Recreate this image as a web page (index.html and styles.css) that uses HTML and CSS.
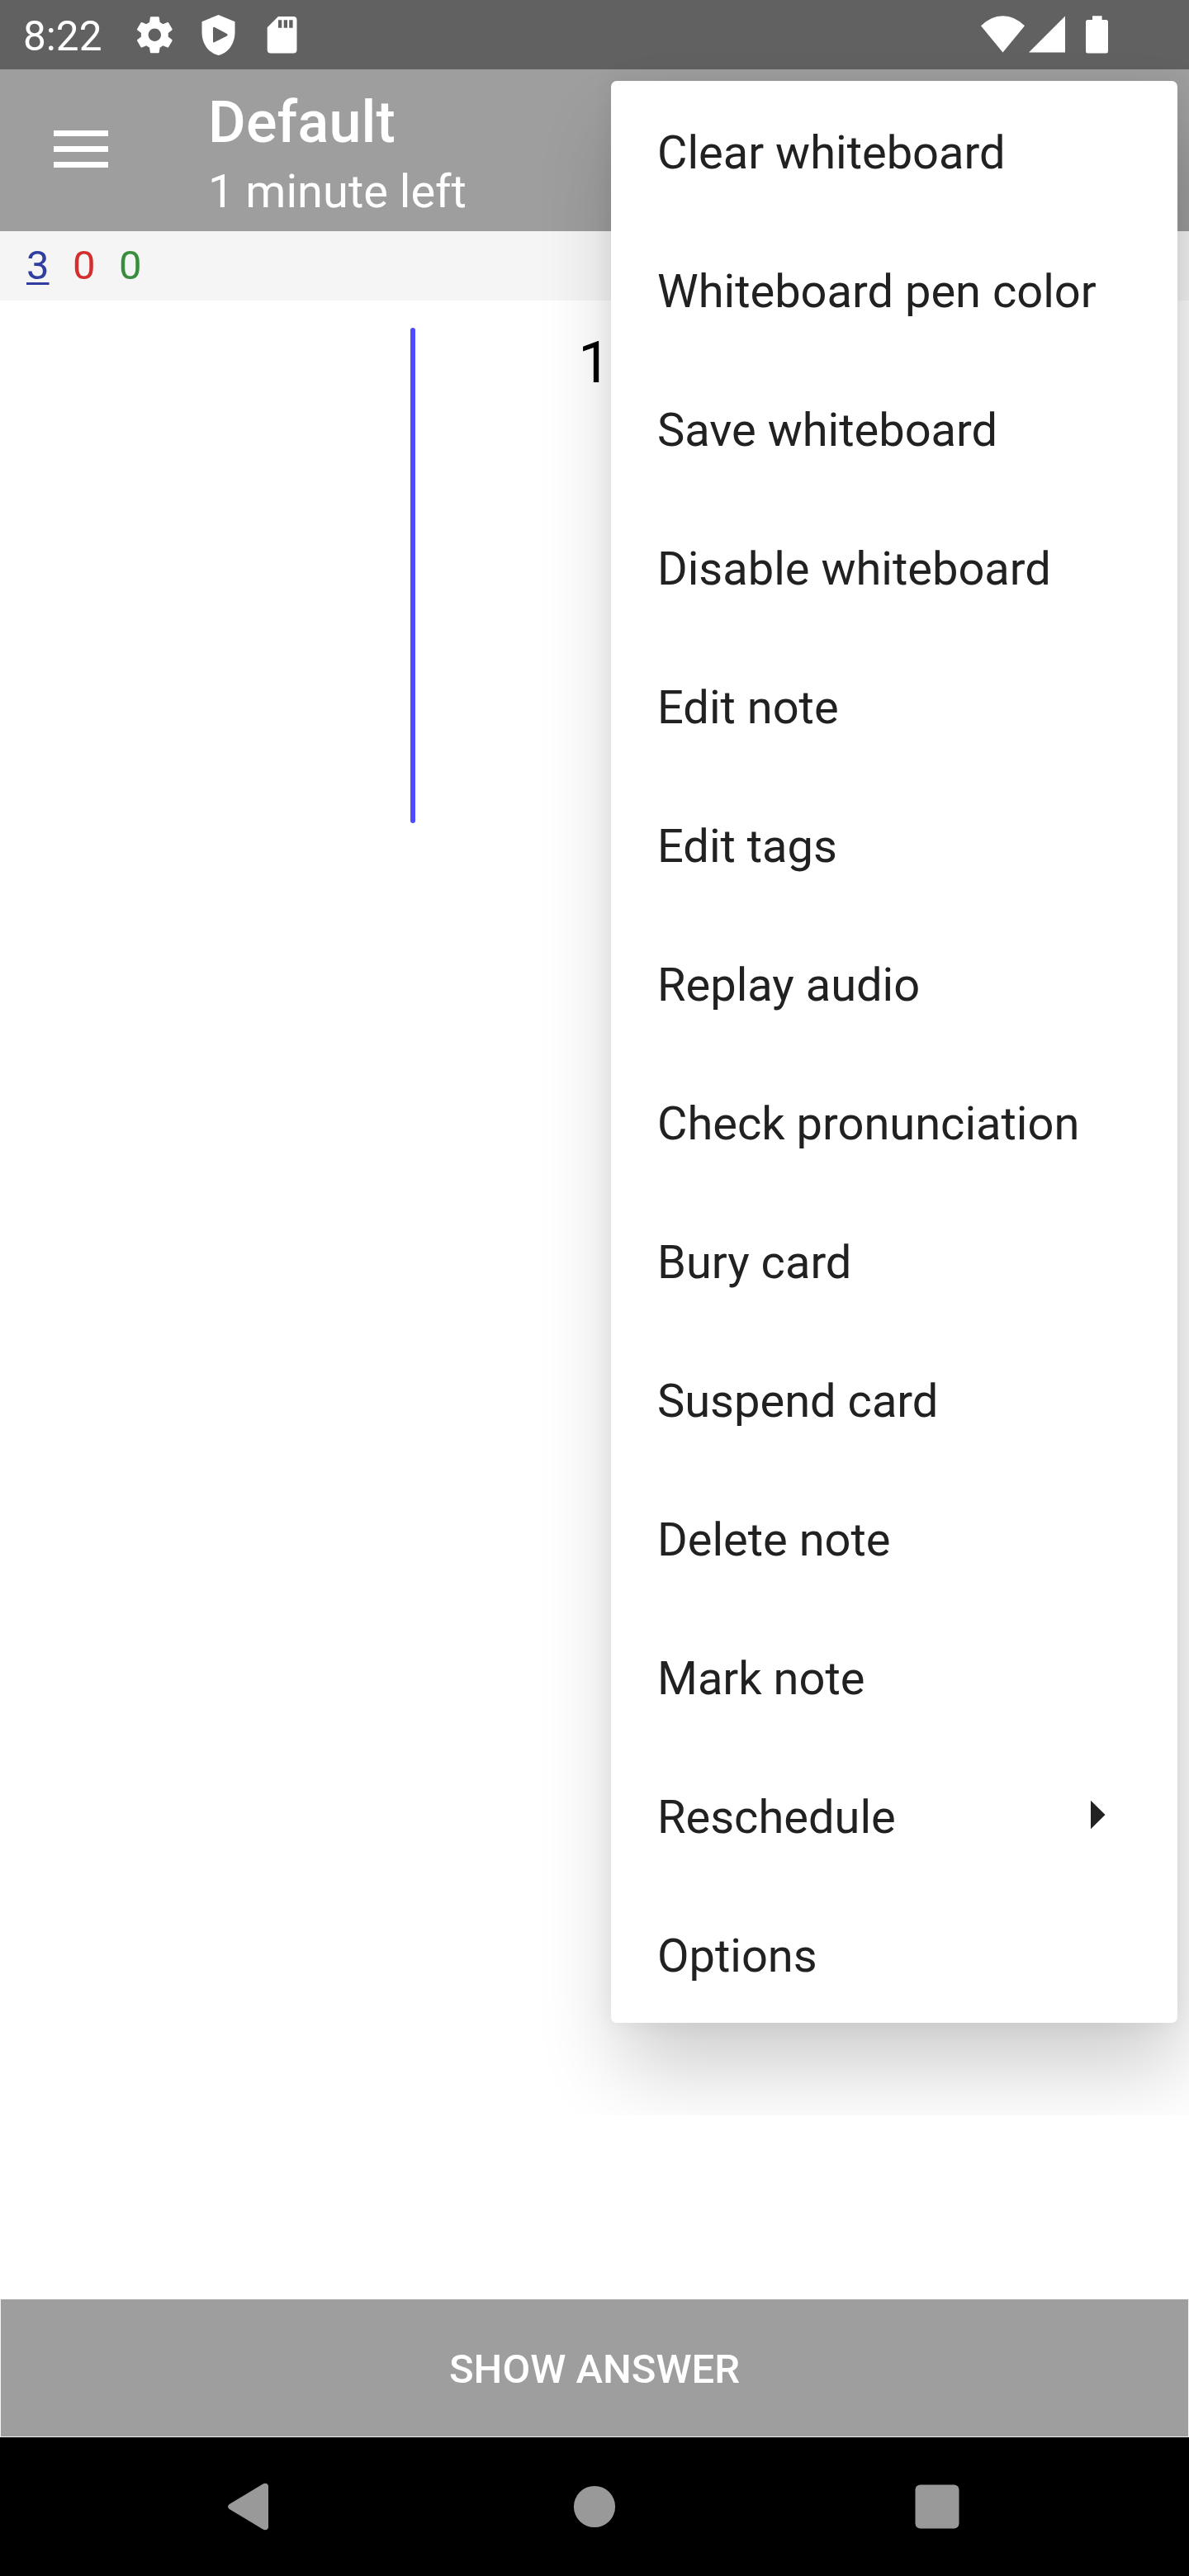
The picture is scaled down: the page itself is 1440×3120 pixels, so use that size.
FILE: index.html
```html
<!DOCTYPE html>
<html lang="en">
<head>
<meta charset="utf-8">
<title>Default</title>
<link rel="stylesheet" href="styles.css">
</head>
<body>
<div class="screen">
  <header class="status">
    <span class="clock">8:22</span>
    <svg class="status-left" width="200" height="84" viewBox="160 0 200 84">
      <path transform="translate(161 15.9) scale(2.195)" d="M19.43 12.98c.04-.32.07-.64.07-.98s-.03-.66-.07-.98l2.11-1.65c.19-.15.24-.42.12-.64l-2-3.46c-.12-.22-.39-.3-.61-.22l-2.49 1c-.52-.4-1.08-.73-1.69-.98l-.38-2.65C14.46 2.18 14.25 2 14 2h-4c-.25 0-.46.18-.49.42l-.38 2.65c-.61.25-1.17.59-1.69.98l-2.49-1c-.23-.09-.49 0-.61.22l-2 3.46c-.13.22-.07.49.12.64l2.11 1.65c-.04.32-.07.65-.07.98s.03.66.07.98l-2.11 1.65c-.19.15-.24.42-.12.64l2 3.46c.12.22.39.3.61.22l2.49-1c.52.4 1.08.73 1.69.98l.38 2.65c.03.24.24.42.49.42h4c.25 0 .46-.18.49-.42l.38-2.65c.61-.25 1.17-.59 1.69-.98l2.49 1c.23.09.49 0 .61-.22l2-3.46c.12-.22.07-.49-.12-.64l-2.11-1.65zM12 15.5c-1.93 0-3.5-1.57-3.5-3.5s1.57-3.5 3.5-3.5 3.5 1.57 3.5 3.5-1.57 3.5-3.5 3.5z"/>
      <path fill-rule="evenodd" d="M264.5 18L284.5 26.3V39C284.5 54 275.500 64.500 264.500 67C253.500 64.500 244.500 54 244.500 39V26.300ZM258 33.500V51Q258.500 51.800 260 51L275 43.500Q276.300 42.300 275 41L260 33Q258.500 32.500 258 33.500Z"/>
      <path fill-rule="evenodd" d="M337 20H355.200Q359.500 20 359.500 24.300V60.200Q359.500 64.500 355.200 64.500H328Q323.700 64.500 323.700 60.200V33.300ZM337 24.300V33.700H341.300V24.300ZM343.700 24.300V33.700H348V24.300ZM350.200 24.300V33.700H354.600V24.300Z"/>
    </svg>
    <svg class="status-right" width="156" height="84" viewBox="1187 0 156 84">
      <path d="M1188 31.300Q1200 19.200 1214.500 19.200T1241 31.300L1214.500 63.500Z"/>
      <path d="M1246 63.600L1290 19.500V63.600Z"/>
      <path d="M1323 19.300H1334.600V24H1339.500Q1342 24 1342 26.500V62Q1342 64.500 1339.500 64.500H1317.500Q1315 64.500 1315 62V26.500Q1315 24 1317.500 24H1323Z"/>
    </svg>
  </header>
  <div class="appbar">
    <svg class="hamburger" width="66" height="45" viewBox="0 0 66 45"><path d="M0 0H66V7H0ZM0 19H66V26H0ZM0 38H66V45H0Z"/></svg>
    <div class="titles">
      <div class="title">Default</div>
      <div class="subtitle">1 minute left</div>
    </div>
  </div>
  <div class="counts">
    <span class="count-new">3</span>
    <span class="count-learn">0</span>
    <span class="count-review">0</span>
  </div>
  <main class="card">
    <span class="question">1</span>
    <div class="stroke"></div>
  </main>
  <button class="answer">SHOW ANSWER</button>
  <nav class="navbar">
    <svg width="60" height="60" viewBox="275 3006 60 60"><path d="M277.800 3033.100L318.500 3008.500Q322 3006.800 324.200 3009Q325 3010 325 3011.500V3060.500Q325 3062 324.200 3063Q322 3065.200 318.500 3063.500L277.800 3038.900Q274.200 3036 277.800 3033.100Z"/></svg>
    <svg width="60" height="60" viewBox="0 0 60 60"><circle cx="30" cy="30" r="25.100"/></svg>
    <svg width="60" height="60" viewBox="0 0 60 60"><rect x="3.500" y="3.500" width="53" height="53" rx="6"/></svg>
  </nav>
  <ul class="menu">
    <li>Clear whiteboard</li>
    <li>Whiteboard pen color</li>
    <li>Save whiteboard</li>
    <li>Disable whiteboard</li>
    <li>Edit note</li>
    <li>Edit tags</li>
    <li>Replay audio</li>
    <li>Check pronunciation</li>
    <li>Bury card</li>
    <li>Suspend card</li>
    <li>Delete note</li>
    <li>Mark note</li>
    <li>Reschedule <svg class="arrow" width="18" height="36" viewBox="0 0 18 36"><path d="M0 .700L17.500 18L0 35.300Z"/></svg></li>
    <li>Options</li>
  </ul>
</div>
</body>
</html>
```

FILE: styles.css
```css
* {
  box-sizing: border-box;
}

body {
  margin: 0;
  font-family: Roboto, "Liberation Sans", sans-serif;
}

svg {
  display: block;
  flex: none;
}

.screen {
  position: relative;
  display: flex;
  flex-direction: column;
  width: 1440px;
  height: 3120px;
  overflow: hidden;
  background: #fff;
}

.status {
  display: flex;
  align-items: center;
  height: 84px;
  padding: 0 97px 0 28px;
  background: #616161;
  color: #fff;
  fill: #fff;
}

.clock {
  width: 132px;
  padding-top: 4px;
  font-size: 49.500px;
  line-height: 58px;
}

.status-right {
  margin-left: auto;
}

.appbar {
  display: flex;
  align-items: flex-start;
  height: 196px;
  padding-left: 65px;
  background: #9e9e9e;
  color: #fff;
}

.hamburger {
  margin: 74px 121px 0 0;
  fill: #fff;
}

.titles {
  padding-top: 23px;
}

.title {
  font-size: 70px;
  font-weight: 500;
  line-height: 82px;
  letter-spacing: .2px;
}

.subtitle {
  padding-top: 10px;
  font-size: 56px;
  line-height: 66px;
}

.counts {
  display: flex;
  align-items: center;
  gap: 28.500px;
  height: 84px;
  padding-left: 32px;
  background: #f5f5f5;
  font-size: 49px;
  line-height: 58px;
}

.count-new {
  color: #303f9f;
  text-decoration: underline;
  text-decoration-thickness: 3px;
  text-underline-offset: 4px;
}

.count-learn {
  color: #d32f2f;
}

.count-review {
  color: #388e3c;
}

.card {
  position: relative;
  flex: 1;
  padding-top: 34px;
  text-align: center;
  font-size: 70px;
  line-height: 82px;
  color: #000;
}

.question {
  display: block;
}

/* Freehand pen mark on the whiteboard layer */
.stroke {
  position: absolute;
  left: 497px;
  top: 33px;
  width: 6px;
  height: 600px;
  border-radius: 3px;
  background: #4d4dff;
}

.answer {
  height: 168px;
  padding: 4px 0 0;
  border: 1px solid #f3f3f3;
  background: #9e9e9e;
  color: #fff;
  font: 500 49px/58px Roboto, "Liberation Sans", sans-serif;
}

.navbar {
  display: grid;
  grid-template-columns: repeat(3, 415px);
  place-content: center;
  justify-items: center;
  height: 168px;
  background: #000;
  fill: #999;
}

.menu {
  position: absolute;
  top: 98px;
  right: 14px;
  width: 686px;
  margin: 0;
  padding: 0;
  list-style: none;
  border-radius: 7px;
  background: #fff;
  box-shadow: 8px 58px 100px -4px rgba(0, 0, 0, .2), 0 0 28px rgba(0, 0, 0, .06);
  clip-path: inset(-98px -14px -112px -112px);
  color: #212121;
  font-size: 56px;
}

.menu li {
  display: flex;
  align-items: center;
  justify-content: space-between;
  height: 168px;
  padding: 5px 87px 0 56px;
}

.arrow {
  margin-top: -5px;
  fill: #212121;
}
```
